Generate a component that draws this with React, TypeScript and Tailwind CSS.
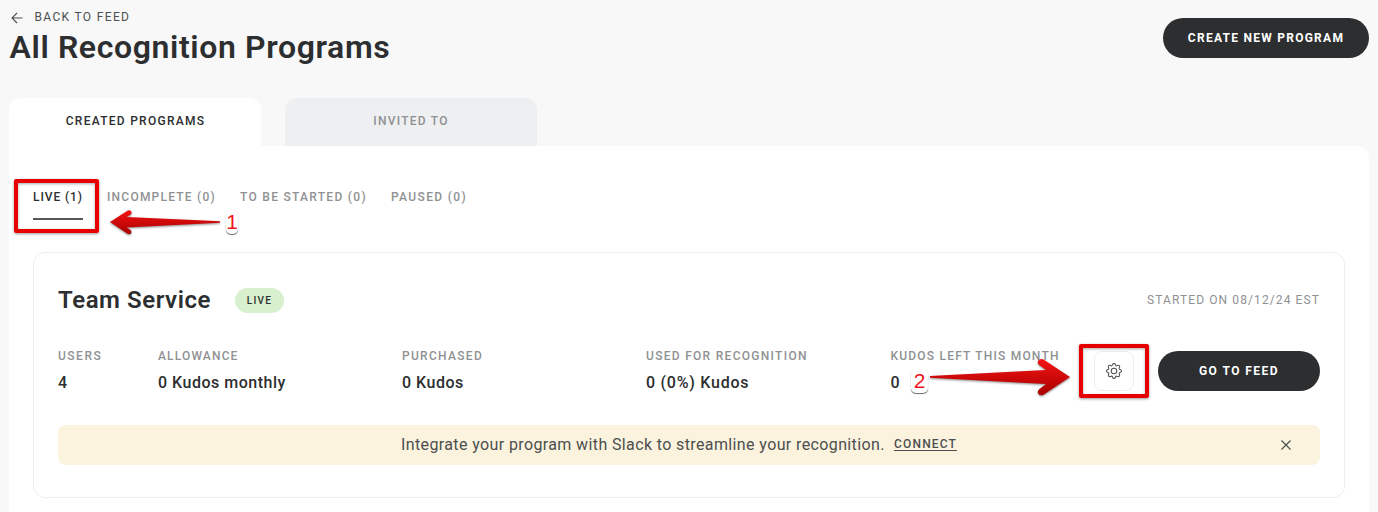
import { BsGear } from "react-icons/bs";

const subTabs = [
  { label: "LIVE (1)", active: true, width: "w-[50px]", spacing: "tracking-[0.92px]" },
  { label: "INCOMPLETE (0)", active: false, width: "w-[109px]", spacing: "tracking-[1.22px]" },
  { label: "TO BE STARTED (0)", active: false, width: "w-[127px]", spacing: "tracking-[1.29px]" },
  { label: "PAUSED (0)", active: false, width: "w-[76px]", spacing: "tracking-[1.35px]" },
];

const stats = [
  { label: "USERS", value: "4", width: "w-[100px]", labelSpacing: "tracking-[1.5px]", valueSpacing: "tracking-normal" },
  { label: "ALLOWANCE", value: "0 Kudos monthly", width: "w-[244px]", labelSpacing: "tracking-[1.15px]", valueSpacing: "tracking-[0.51px]" },
  { label: "PURCHASED", value: "0 Kudos", width: "w-[244px]", labelSpacing: "tracking-[1.3px]", valueSpacing: "tracking-[0.5px]" },
  { label: "USED FOR RECOGNITION", value: "0 (0%) Kudos", width: "w-[244.5px]", labelSpacing: "tracking-[1.29px]", valueSpacing: "tracking-[0.75px]" },
  { label: "KUDOS LEFT THIS MONTH", value: "0", width: "w-[203.5px]", labelSpacing: "tracking-[1.2px]", valueSpacing: "tracking-normal" },
];

function Header() {
  return (
    <header className="flex h-[98px] shrink-0 items-start justify-between">
      <div className="pt-[9px]">
        <a className="flex items-center text-[12px] leading-4 tracking-[1.34px] text-[#4c4f50]">
          <svg className="mt-[1px] mr-[11.5px] ml-[2px]" width="12" height="12" viewBox="0 0 12 12" fill="none" stroke="#4c4f50" strokeWidth="1.1">
            <path d="M11.5 6H1M6 1 1 6l5 5" />
          </svg>
          BACK TO FEED
        </a>
        <h1 className="pl-[0.5px] text-[32px] leading-[44px] font-semibold tracking-[0.62px]">All Recognition Programs</h1>
      </div>
      <button className="mt-[18px] flex h-10 w-[206px] items-center justify-center rounded-full bg-[#2c2e2f] text-[12px] font-bold tracking-[1.26px] text-white">
        CREATE NEW PROGRAM
      </button>
    </header>
  );
}

function SubTabs() {
  return (
    <nav className="flex gap-6 pl-6 text-[12px] leading-4 font-medium whitespace-nowrap">
      {subTabs.map((tab) => (
        <a
          key={tab.label}
          className={`h-[31px] border-b-2 ${tab.width} ${tab.spacing} ${tab.active ? "border-[#555759] text-[#2c2e2f]" : "border-transparent text-[#8f9193]"}`}
        >
          {tab.label}
        </a>
      ))}
    </nav>
  );
}

function ProgramCard() {
  return (
    <section className="mx-6 mt-8 h-[246px] rounded-xl border border-[#efeff0] px-6">
      <div className="flex h-[60px] items-end justify-between">
        <div className="flex h-[26px] items-center">
          <h2 className="w-[177px] text-[24px] leading-[26px] font-semibold tracking-[0.55px]">Team Service</h2>
          <span className="flex h-[25px] w-[49px] items-center justify-center rounded-full bg-[#d8f0cd] text-[10px] font-medium tracking-[1.3px]">
            LIVE
          </span>
        </div>
        <span className="pb-[5px] text-[12px] leading-4 tracking-[1.1px] text-[#8f9193]">STARTED ON 08/12/24 EST</span>
      </div>
      <div className="flex pt-6">
        <dl className="flex pt-[9px] whitespace-nowrap">
          {stats.map((s) => (
            <div key={s.label} className={s.width}>
              <dt className={`h-[19px] pt-[1px] text-[12px] leading-[18px] font-medium text-[#8f9193] ${s.labelSpacing}`}>{s.label}</dt>
              <dd className={`pt-px text-[16px] leading-[34px] font-medium ${s.valueSpacing}`}>{s.value}</dd>
            </div>
          ))}
        </dl>
        <button className="mt-[14px] flex size-10 items-center justify-center rounded-lg border border-[#eeeeef]">
          <BsGear size={16} color="#4c4f50" />
        </button>
        <button className="mt-[14px] ml-6 flex h-10 w-[162px] items-center justify-center rounded-full bg-[#2c2e2f] text-[12px] font-bold tracking-[1.45px] text-white">
          GO TO FEED
        </button>
      </div>
      <div className="mt-[25px] flex h-10 items-center rounded-lg bg-[#fbf3dd] pl-[343px] text-[#4c4f50]">
        <p className="w-[493px] text-[16px] tracking-[0.38px] whitespace-nowrap">
          Integrate your program with Slack to streamline your recognition.
        </p>
        <a className="mb-[2px] border-b border-[#4c4f50] text-[12px] leading-[12px] font-medium tracking-[1.17px]">CONNECT</a>
        <svg className="mr-[29px] ml-auto" width="10" height="10" viewBox="0 0 10 10" stroke="#4c4f50" strokeWidth="1.2">
          <path d="m.5.5 9 9m0-9-9 9" />
        </svg>
      </div>
    </section>
  );
}

function Annotations() {
  return (
    <>
      <div className="absolute top-[179px] left-[14px] h-[54px] w-[85px] rounded-[2px] border-4 border-[#e60000] shadow-[0_1px_3px_#0006,inset_0_1px_3px_#0005]" />
      <div className="absolute top-[344px] left-[1079px] h-[54px] w-[70px] rounded-[2px] border-4 border-[#e60000] shadow-[0_1px_3px_#0006,inset_0_1px_3px_#0005]" />
      <svg className="absolute inset-0 drop-shadow-[0_1px_1px_#0007]" width="1378" height="512">
        <defs>
          <linearGradient id="red" x1="0" y1="0" x2="0" y2="1">
            <stop offset="0" stopColor="#f51212" />
            <stop offset="1" stopColor="#a80000" />
          </linearGradient>
        </defs>
        <path fill="url(#red)" d="M110 222 127.5 210.7Q130.5 209.5 131.5 212 131.8 213.7 130.5 214.8L126.5 217 220 221.3V222.7L126.5 227.5 130.5 230Q132 231.5 131 233.3 129.5 235 127.5 233.8Z" />
        <path fill="url(#red)" d="M1070 377 1043.5 359.5Q1040 357.8 1038 361 1037.3 363.5 1039.5 365.2L1046 370 930 375.9V377.7L1046 384 1039.5 389Q1037.3 390.7 1038 393.3 1040 396.5 1043.5 394.7Z" />
      </svg>
      <span className="absolute top-[210px] left-[226px] h-6 w-[12px] rounded-[5px] bg-white text-center font-['Liberation_Sans',sans-serif] text-[21px] leading-[24px] text-[#f0141e] shadow-[0_1px_1px_#0009]">1</span>
      <span className="absolute top-[369px] left-[911px] h-6 w-[17px] rounded-[5px] bg-white text-center font-['Liberation_Sans',sans-serif] text-[21px] leading-[24px] text-[#f0141e] shadow-[0_1px_1px_#0009]">2</span>
    </>
  );
}

export default function App() {
  return (
    <div className="relative flex h-[512px] w-[1378px] flex-col overflow-hidden bg-[#f8f8f8] px-[9px] font-['Roboto',sans-serif] text-[#2c2e2f]">
      <Header />
      <div className="flex shrink-0 gap-6 text-[12px] leading-[46px] font-medium">
        <div className="h-12 w-[252px] rounded-t-xl bg-white pl-[1px] text-center tracking-[1.27px]">CREATED PROGRAMS</div>
        <div className="h-12 w-[252px] rounded-t-xl bg-[#eeeff1] text-center tracking-[1.25px] text-[#8f9193]">INVITED TO</div>
      </div>
      <main className="flex-1 rounded-tr-xl bg-white pt-[43px]">
        <SubTabs />
        <ProgramCard />
      </main>
      <Annotations />
    </div>
  );
}
